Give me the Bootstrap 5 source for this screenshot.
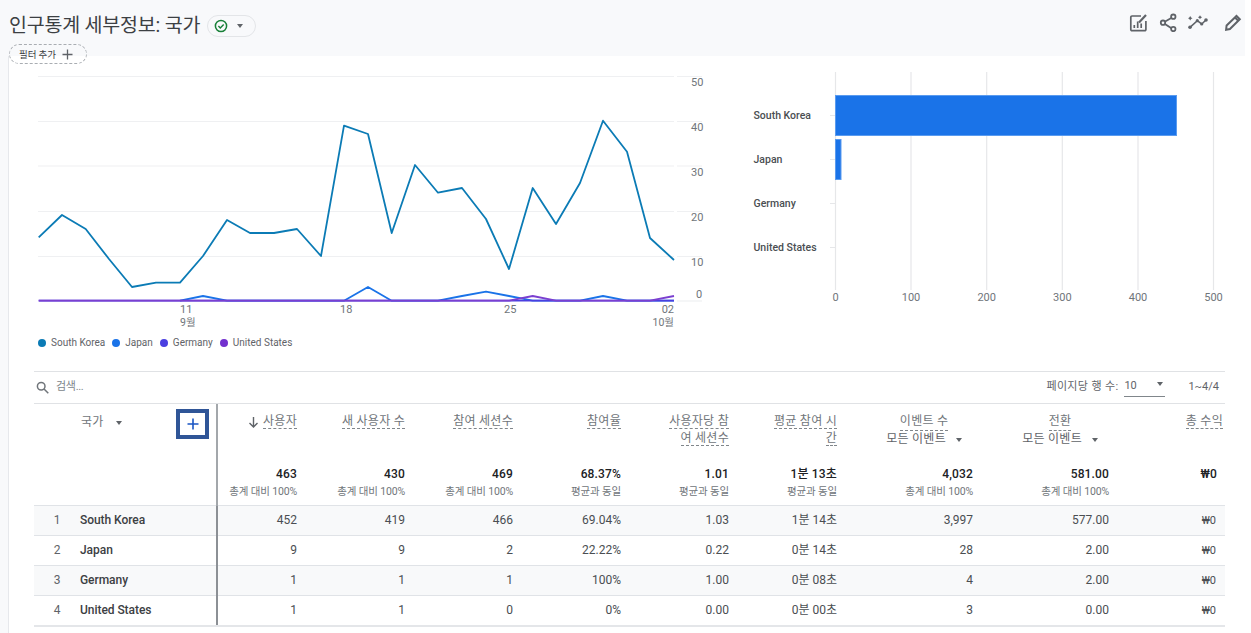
<!DOCTYPE html>
<html lang="ko">
<head>
<meta charset="utf-8">
<title>인구통계 세부정보: 국가</title>
<link href="https://cdn.jsdelivr.net/npm/bootstrap@5.3.0/dist/css/bootstrap.min.css" rel="stylesheet">
<style>
html,body{margin:0;height:633px;overflow:hidden;background:#fff}
body{font-family:Roboto,"Noto Sans CJK KR",sans-serif;font-size:12px;color:#3c4043}
.shell{width:1245px;height:633px;background:#f8f9fb;display:flex;flex-direction:column}
.rep-head{height:56px;flex:none;position:relative;z-index:2}
.rep-left{padding:15px 0 0 9px}
.rep-title{font-size:19.5px;line-height:22px;font-weight:400;color:#3c4043;margin:0;letter-spacing:-.2px}
.status-pill{width:49px;height:22px;border:1px solid #e3e5e8;border-radius:11px;margin-left:7px;padding-left:6px;gap:9px;background:#f8f9fb}
.filter-pill{width:78px;height:20px;margin-top:7px;border:1px dashed #a9adb2;border-radius:10px;font-size:9.5px;line-height:17px;padding-left:9px;gap:6px;color:#3c4043;letter-spacing:-.1px}
.rep-icons{padding:12px 2px 0 0;gap:10px}
.rep-icons svg:last-child{margin-left:5px}
.rep-body{flex:1;margin-left:8px;background:#fff;border-left:1px solid #e6e8ec;min-height:0}
.charts svg{display:block}
.line-svg text,.bar-svg text{font-family:Roboto,"Noto Sans CJK KR",sans-serif;font-size:11px;fill:#70757a}
.line-svg text.mon{font-size:10.5px}
.bar-svg text.cat{font-size:10.5px;font-weight:500;fill:#4a4e52}
.legend-row{height:15px;margin:5px 0 0 29px;font-size:10px;line-height:15px;color:#5f6368}
.leg-item{gap:5px;margin-right:7px}
.leg-dot{width:8px;height:8px;border-radius:50%;flex:none}
.table-box{margin:21px 0 0 25px;width:1191px}
.tool-row{height:33px;border-top:1px solid #e0e2e5;border-bottom:1px solid #e0e2e5;padding:0 6px 0 2px;font-size:11px;color:#5f6368}
.srch{color:#80868b;margin-left:7px;letter-spacing:-.3px}
.pager-lbl{letter-spacing:.35px}
.pager-sel{width:41px;height:19px;border-bottom:1px solid #80868b;margin:6px 23px 0 6px;padding:0 2px 0 0;line-height:15px;align-items:flex-start;align-self:flex-start}
.tri{display:inline-block;width:0;height:0;border-left:3.5px solid transparent;border-right:3.5px solid transparent;border-top:4px solid #5f6368}
.gt.table{table-layout:fixed;width:1191px;margin:0;--bs-table-bg:transparent;--bs-table-border-color:#e0e3e7;color:#4a4e52}
.gt.table>:not(caption)>*>*{padding:0 8px;border:0;box-shadow:none;font-size:12px;line-height:17px;background:transparent;text-align:right;font-weight:400}
.gt.table .hdr-row>th{height:60px;vertical-align:top;padding-top:9px;color:#70757a;letter-spacing:.27px}
.gt.table .tot-row>td{height:41px;vertical-align:top;padding-top:2px;border-bottom:1px solid #e0e3e7}
.gt.table tbody td{height:30px;vertical-align:middle;border-bottom:1px solid #e0e3e7}
.gt.table tbody tr:nth-child(odd) td{background:#f8f9fa}
.gt.table tbody tr:last-child td{height:31px;border-bottom:2px solid #e4e6e9}
.gt.table>:not(caption)>*>.first-head{text-align:left;padding:5px 7px 0 47px;vertical-align:top;border-bottom:1px solid #e0e3e7;border-right:2px solid #a3a7ab;color:#70757a}
.gt.table>tbody>tr>.cell-name{text-align:left;padding-left:0;font-weight:500;color:#3c4043;border-right:2px solid #8c9095;letter-spacing:-.05px}
.gt.table>tbody>tr>.cell-rank{text-align:center;padding:0;color:#5f6368}
.gt.table>tbody>tr>.cell-zero{padding-right:9px;font-size:11px}
.plus-box{width:33px;height:30px;border:4px solid #2f5597;display:flex;align-items:center;justify-content:center;background:#fff}
.head-lbl{margin-top:5px;gap:12px}
.dash{border-bottom:1px dashed #80868b;padding-bottom:0;display:inline}
.tot-num{font-weight:500;color:#202124;line-height:17px;letter-spacing:.15px}
.tot-sub{font-size:10.5px;color:#70757a;line-height:17px;letter-spacing:-.15px}
.metric-wrap{display:inline-flex;flex-direction:column;align-items:center;margin-right:11px}
.metric-sub{color:#5f6368;gap:10px;margin-top:0;white-space:nowrap}
.head-last{margin-right:-6px}
</style>
</head>
<body>
<div class="shell">
  <header class="rep-head d-flex justify-content-between">
    <div class="rep-left">
      <div class="d-flex align-items-center">
        <h1 class="rep-title">인구통계 세부정보: 국가</h1>
        <div class="status-pill d-flex align-items-center">
          <svg width="14" height="14" viewBox="0 0 14 14"><circle cx="7" cy="7" r="5.600" fill="none" stroke="#188038" stroke-width="1.500"/><path d="M4.400 7.100l1.900 1.900 3.400-3.600" fill="none" stroke="#188038" stroke-width="1.400"/></svg>
          <span class="tri"></span>
        </div>
      </div>
      <div class="filter-pill d-flex align-items-center">
        <span>필터 추가</span>
        <svg width="11" height="11" viewBox="0 0 11 11"><path d="M5.500 .5v10M.5 5.500h10" stroke="#5f6368" stroke-width="1.300"/></svg>
      </div>
    </div>
    <div class="rep-icons d-flex align-items-start">
      <svg width="20" height="20" viewBox="0 0 20 20" fill="none" stroke="#5f6368"><path d="M13 4H4a1.200 1.200 0 0 0-1.200 1.200v12.300A1.200 1.200 0 0 0 4 18.700h12.700a1.200 1.200 0 0 0 1.200-1.200V9" stroke-width="1.700"/><path d="M11 10.500l7-7.500" stroke-width="2.200"/><path d="M6.300 16v-3M9.700 16V9.500M13.200 16v-4.500" stroke-width="1.700"/></svg>
      <svg width="20" height="20" viewBox="0 0 20 20" fill="none" stroke="#5f6368" stroke-width="1.800"><path d="M15 5l-10 5.800 10 6.500"/><circle cx="15.300" cy="4.700" r="2.200" fill="#f8f9fb"/><circle cx="5" cy="10.700" r="2.200" fill="#f8f9fb"/><circle cx="15.300" cy="17" r="2.200" fill="#f8f9fb"/></svg>
      <svg width="20" height="20" viewBox="0 0 20 20" fill="#5f6368"><path d="M2 15.300l7.300-6.600 4.400 3.300L18 8" fill="none" stroke="#5f6368" stroke-width="1.600"/><circle cx="2" cy="15.300" r="1.800"/><circle cx="9.300" cy="8.700" r="1.600"/><circle cx="13.700" cy="12" r="1.600"/><circle cx="18" cy="8" r="1.800"/><path d="M1.300 5.500L2.200 4l.9 1.500 1.400.8-1.400.8-.9 1.500-.9-1.500-1.400-.8zM12 3.200l.8 1.300 1.300.7-1.300.7-.8 1.300-.8-1.300-1.300-.7 1.300-.7z"/></svg>
      <svg width="20" height="20" viewBox="0 0 20 20" fill="none" stroke="#5f6368" stroke-width="2"><path d="M3.600 13.500L13.500 4l3.300 3.300-9.900 9.700-3.800.8z"/><path d="M12 5.500l3.300 3.300"/></svg>
    </div>
  </header>

  <main class="rep-body">
    <div class="charts d-flex">
      <svg class="line-svg flex-none" width="720" height="274" viewBox="9 56 720 274">
        <g stroke="#eff0f2" stroke-width="1.200">
          <path d="M38 76.500H674M677 76.500H702"/>
          <path d="M38 121.500H674M677 121.500H702"/>
          <path d="M38 166H674M677 166H702"/>
          <path d="M38 211.500H674M677 211.500H702"/>
          <path d="M38 256.500H674M677 256.500H702"/>
          <path d="M677 301H702"/>
        </g>
        <text x="691" y="86">50</text><text x="691" y="131">40</text><text x="691" y="176">30</text><text x="691" y="221">20</text><text x="691" y="266">10</text><text x="696" y="298">0</text>
        <polyline fill="none" stroke="#0b7bb5" stroke-width="1.800" stroke-linejoin="round" points="38.700,237.300 62,215 85.700,229 109,259 132,287 156,282.700 180,282.700 203,256 227,220 250,233 274,233 297,229 321,256 344,125.700 368,134 391.700,233 415,165 438,192.700 462,188 486,219 509,269 532.700,188 556,224 580,183 603,120.700 627,151.700 650,238 674,260"/>
        <polyline fill="none" stroke="#1a73e8" stroke-width="1.800" stroke-linejoin="round" points="180,300.700 203,296 227,300.700 344,300.700 368,287 391.700,300.700 438,300.700 462,296 486,291.700 509,296 532.700,300.700 580,300.700 603,296 627,300.700 674,300.700"/>
        <polyline fill="none" stroke="#4a3fe0" stroke-width="1.800" points="38.700,300.700 674,300.700"/>
        <polyline fill="none" stroke="#7b3fd0" stroke-width="1.800" stroke-linejoin="round" points="38.700,300.700 509,300.700 532.700,296 556,300.700 650,300.700 674,296"/>
        <text x="180" y="313">11</text><text class="mon" x="180" y="325.500">9월</text>
        <text x="340" y="313">18</text><text x="504" y="313">25</text>
        <text x="674" y="313" text-anchor="end">02</text><text class="mon" x="674" y="325.500" text-anchor="end">10월</text>
      </svg>
      <svg class="bar-svg flex-none" width="516" height="274" viewBox="729 56 516 274">
        <g stroke="#e6e7e9" stroke-width="1.200">
          <path d="M835.500 72V290M911 72V290M986.700 72V290M1062.300 72V290M1138 72V290M1213.500 72V290"/>
          <path d="M830 115.500H835M830 159.500H835M830 203.500H835M830 247.500H835"/>
        </g>
        <rect x="835.500" y="95.500" width="341" height="40" fill="#1a73e8" stroke="#5a9bef"/>
        <rect x="835.500" y="139.500" width="5.500" height="40" fill="#1a73e8" stroke="#5a9bef"/>
        <text class="cat" x="753.500" y="119">South Korea</text>
        <text class="cat" x="753.500" y="163">Japan</text>
        <text class="cat" x="753.500" y="207">Germany</text>
        <text class="cat" x="753.500" y="251">United States</text>
        <g text-anchor="middle"><text x="835.500" y="301">0</text><text x="911" y="301">100</text><text x="986.700" y="301">200</text><text x="1062.300" y="301">300</text><text x="1138" y="301">400</text><text x="1213.500" y="301">500</text></g>
      </svg>
    </div>

    <div class="legend-row d-flex align-items-center">
      <span class="leg-item d-flex align-items-center"><i class="leg-dot" style="background:#0b7bb5"></i>South Korea</span>
      <span class="leg-item d-flex align-items-center"><i class="leg-dot" style="background:#1a73e8"></i>Japan</span>
      <span class="leg-item d-flex align-items-center"><i class="leg-dot" style="background:#4a3fe0"></i>Germany</span>
      <span class="leg-item d-flex align-items-center"><i class="leg-dot" style="background:#7230ce"></i>United States</span>
    </div>

    <section class="table-box">
      <div class="tool-row d-flex align-items-center">
        <svg width="13" height="13" viewBox="0 0 13 13" fill="none" stroke="#70757a" stroke-width="1.500"><circle cx="5.200" cy="5.200" r="3.800"/><path d="M8 8l4.300 4.300"/></svg>
        <span class="srch">검색...</span>
        <span class="ms-auto pager-lbl">페이지당 행 수:</span>
        <span class="pager-sel d-flex justify-content-between"><span>10</span><span class="tri mt-1"></span></span>
        <span>1~4/4</span>
      </div>
      <table class="gt table">
        <colgroup><col style="width:46px"><col style="width:137px"><col style="width:88px"><col style="width:108px"><col style="width:108px"><col style="width:108px"><col style="width:108px"><col style="width:108px"><col style="width:136px"><col style="width:136px"><col style="width:108px"></colgroup>
        <thead>
          <tr class="hdr-row">
            <th class="first-head" colspan="2" rowspan="2">
              <div class="d-flex align-items-start">
                <span class="head-lbl d-flex align-items-center">국가 <span class="tri"></span></span>
                <span class="plus-box ms-auto"><svg width="12" height="12" viewBox="0 0 12 12"><path d="M6 .5v11M.5 6h11" stroke="#1a56c4" stroke-width="1.600"/></svg></span>
              </div>
            </th>
            <th><svg width="11" height="12" viewBox="0 0 11 12" class="me-1"><path d="M5.500 1v10M1.500 7l4 4 4-4" fill="none" stroke="#5f6368" stroke-width="1.400"/></svg><span class="dash">사용자</span></th>
            <th><span class="dash">새 사용자 수</span></th>
            <th><span class="dash">참여 세션수</span></th>
            <th><span class="dash">참여율</span></th>
            <th><span class="dash">사용자당 참<br>여 세션수</span></th>
            <th><span class="dash">평균 참여 시<br>간</span></th>
            <th><span class="metric-wrap"><span class="dash">이벤트 수</span><span class="metric-sub d-flex align-items-center">모든 이벤트 <span class="tri"></span></span></span></th>
            <th><span class="metric-wrap"><span class="dash">전환</span><span class="metric-sub d-flex align-items-center">모든 이벤트 <span class="tri"></span></span></span></th>
            <th><span class="dash head-last">총 수익</span></th>
          </tr>
          <tr class="tot-row">
            <td><div class="tot-num">463</div><div class="tot-sub">총계 대비 100%</div></td>
            <td><div class="tot-num">430</div><div class="tot-sub">총계 대비 100%</div></td>
            <td><div class="tot-num">469</div><div class="tot-sub">총계 대비 100%</div></td>
            <td><div class="tot-num">68.37%</div><div class="tot-sub">평균과 동일</div></td>
            <td><div class="tot-num">1.01</div><div class="tot-sub">평균과 동일</div></td>
            <td><div class="tot-num">1분 13초</div><div class="tot-sub">평균과 동일</div></td>
            <td><div class="tot-num">4,032</div><div class="tot-sub">총계 대비 100%</div></td>
            <td><div class="tot-num">581.00</div><div class="tot-sub">총계 대비 100%</div></td>
            <td><div class="tot-num">₩0</div></td>
          </tr>
        </thead>
        <tbody>
          <tr><td class="cell-rank">1</td><td class="cell-name">South Korea</td><td>452</td><td>419</td><td>466</td><td>69.04%</td><td>1.03</td><td>1분 14초</td><td>3,997</td><td>577.00</td><td class="cell-zero">₩0</td></tr>
          <tr><td class="cell-rank">2</td><td class="cell-name">Japan</td><td>9</td><td>9</td><td>2</td><td>22.22%</td><td>0.22</td><td>0분 14초</td><td>28</td><td>2.00</td><td class="cell-zero">₩0</td></tr>
          <tr><td class="cell-rank">3</td><td class="cell-name">Germany</td><td>1</td><td>1</td><td>1</td><td>100%</td><td>1.00</td><td>0분 08초</td><td>4</td><td>2.00</td><td class="cell-zero">₩0</td></tr>
          <tr><td class="cell-rank">4</td><td class="cell-name">United States</td><td>1</td><td>1</td><td>0</td><td>0%</td><td>0.00</td><td>0분 00초</td><td>3</td><td>0.00</td><td class="cell-zero">₩0</td></tr>
        </tbody>
      </table>
    </section>
  </main>
</div>
<script src="https://cdn.jsdelivr.net/npm/bootstrap@5.3.0/dist/js/bootstrap.bundle.min.js"></script>
</body>
</html>
